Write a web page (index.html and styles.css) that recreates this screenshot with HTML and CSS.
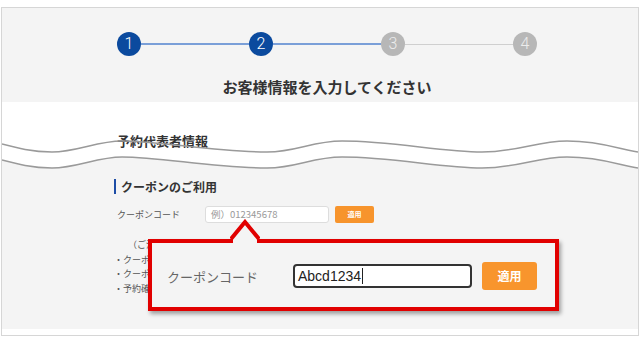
FILE: index.html
```html
<!DOCTYPE html>
<html lang="ja">
<head>
  <meta charset="UTF-8" />
  <meta name="viewport" content="width=device-width, initial-scale=1" />
  <title>お客様情報の入力</title>
  <link rel="stylesheet" href="styles.css">
</head>
<body>
  <div class="frame">
    <div class="head">
      <div class="steps">
        <span class="step done">1</span>
        <span class="bar done"></span>
        <span class="step done">2</span>
        <span class="bar done"></span>
        <span class="step">3</span>
        <span class="bar"></span>
        <span class="step">4</span>
      </div>
      <h1 class="title">お客様情報を入力してください</h1>
    </div>

    <div class="tear">
      <h2 class="sub">予約代表者情報</h2>
      <svg class="wave" width="636" height="36" viewBox="0 0 636 36">
        <path d="M0,24 C15,28 30,32 50,32 C75,32 95,21 120,21 C160,21 210,32 265,32 C295,32 310,21 340,21 C390,21 440,32 480,32 C515,32 535,21 565,21 C600,21 620,30 636,32 L636,36 L0,36 Z" fill="#f4f4f4" />
        <path d="M0,8 C15,12 30,16 50,16 C75,16 95,5 120,5 C160,5 210,16 265,16 C295,16 310,5 340,5 C390,5 440,16 480,16 C515,16 535,5 565,5 C600,5 620,14 636,16" fill="none" stroke="#9a9a9a" stroke-width="1.5" />
        <path d="M0,24 C15,28 30,32 50,32 C75,32 95,21 120,21 C160,21 210,32 265,32 C295,32 310,21 340,21 C390,21 440,32 480,32 C515,32 535,21 565,21 C600,21 620,30 636,32" fill="none" stroke="#9a9a9a" stroke-width="1.5" />
      </svg>
    </div>

    <div class="coupon">
      <h3 class="coupon-head">クーポンのご利用</h3>
      <div class="row">
        <span class="label">クーポンコード</span>
        <span class="field">例）012345678</span>
        <span class="apply">適用</span>
      </div>
      <div class="notes">
        <p class="note-title">（ご注意）</p>
        <p>・クーポン</p>
        <p>・クーポン</p>
        <p>・予約確定</p>
      </div>

      <div class="popup">
        <svg class="pointer" width="30" height="26" viewBox="0 0 30 26">
          <polygon points="3,24 3,20 15,6 27,20 27,24" fill="#f4f4f4" />
          <polyline points="1,20 15,3 29,20" fill="none" stroke="#e10000" stroke-width="4" />
        </svg>
        <span class="pop-label">クーポンコード</span>
        <div class="pop-field"><span class="typed">Abcd1234</span></div>
        <span class="pop-apply">適用</span>
      </div>
    </div>
  </div>
</body>
</html>
```

FILE: styles.css
```css
* {
  box-sizing: border-box;
}
body {
  margin: 0;
  background-color: #fff;
  font-family: "Noto Sans CJK JP", "Noto Sans", sans-serif;
  color: #333;
}
.frame {
  margin: 7px 1px 0;
  height: 329px;
  border: 1px solid #d6d6d6;
  overflow: hidden;
}
.head {
  background-color: #f4f4f4;
  height: 94px;
  padding-top: 24px;
}
.steps {
  display: flex;
  align-items: center;
  padding-left: 115px;
}
.step {
  width: 24px;
  height: 24px;
  border-radius: 50%;
  background-color: #b7b7b7;
  color: #ececec;
  font-family: Roboto, sans-serif;
  font-weight: 300;
  font-size: 16px;
  line-height: 24px;
  text-align: center;
}
.step.done {
  background-color: #0b4a9e;
  color: #fff;
}
.bar {
  width: 108px;
  height: 1px;
  background-color: #cfcfcf;
}
.bar.done {
  height: 2px;
  background-color: #7a9fd8;
}
.title {
  margin: 21px 0 0;
  padding-left: 14px;
  font-size: 15px;
  line-height: 20px;
  font-weight: bold;
  text-align: center;
  color: #333;
}
.tear {
  position: relative;
  height: 70px;
  background-color: #fff;
  padding: 30px 0 0 115px;
}
.sub {
  margin: 0;
  font-size: 13px;
  line-height: 18px;
  font-weight: bold;
  color: #333;
}
.wave {
  position: absolute;
  left: 0;
  bottom: 0;
  display: block;
}
.coupon {
  position: relative;
  height: 157px;
  background-color: #f4f4f4;
  padding: 7px 0 0 112px;
}
.coupon-head {
  margin: 0;
  border-left: 2px solid #1d4da6;
  padding-left: 5px;
  font-size: 12px;
  line-height: 15px;
  font-weight: bold;
  color: #333;
}
.row {
  display: flex;
  align-items: center;
  margin-top: 12px;
  padding-left: 3px;
}
.label {
  width: 88px;
  font-size: 9px;
  color: #555;
}
.field {
  width: 124px;
  height: 17px;
  background-color: #fff;
  border: 1px solid #ddd;
  border-radius: 3px;
  padding-left: 5px;
  font-size: 9.5px;
  line-height: 15px;
  color: #999;
}
.apply {
  margin-left: 6px;
  width: 39px;
  height: 17px;
  border-radius: 2px;
  background-color: #f7942c;
  color: #fff;
  font-size: 7px;
  font-weight: bold;
  line-height: 17px;
  text-align: center;
}
.notes {
  margin-top: 15px;
  font-size: 9px;
  line-height: 14.5px;
  color: #555;
}
.notes p {
  margin: 0;
}
.notes .note-title {
  padding-left: 14px;
}
.popup {
  position: absolute;
  left: 146px;
  top: 67px;
  width: 411px;
  height: 72px;
  border: 4px solid #e10000;
  background-color: #f4f4f4;
  box-shadow: 2px 3px 4px rgba(0, 0, 0, 0.35);
  display: flex;
  align-items: center;
  padding: 2px 0 0 15px;
}
.pointer {
  position: absolute;
  left: 78px;
  top: -24px;
  display: block;
}
.pop-label {
  width: 126px;
  font-size: 13px;
  color: #666;
}
.pop-field {
  width: 179px;
  height: 24px;
  background-color: #fff;
  border: 2px solid #333;
  border-radius: 4px;
  padding-left: 3px;
  font-family: "Liberation Sans", Arial, sans-serif;
  font-size: 14px;
  line-height: 20px;
  color: #222;
}
.typed {
  border-right: 1px solid #222;
  padding-right: 1px;
}
.pop-apply {
  margin-left: 10px;
  width: 55px;
  height: 28px;
  border-radius: 3px;
  background-color: #f8952d;
  color: #fff;
  font-size: 12px;
  font-weight: bold;
  line-height: 28px;
  text-align: center;
}
```
